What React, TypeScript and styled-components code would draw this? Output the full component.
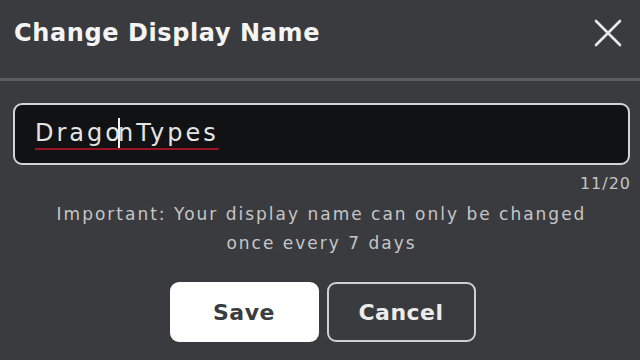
import React from 'react';
import styled, { createGlobalStyle } from 'styled-components';

const Global = createGlobalStyle`
  html, body {
    margin: 0;
    padding: 0;
    background: #393b3f;
  }
  body {
    font-family: "DejaVu Sans", "Liberation Sans", sans-serif;
    color: #ffffff;
  }
`

const Dialog = styled.div`
  width: 640px;
  height: 360px;
  background: #393b3f;
  display: flex;
  flex-direction: column;
  overflow: hidden;
`

const Header = styled.div`
  height: 78px;
  display: flex;
  align-items: center;
  justify-content: space-between;
  padding: 0 16px 12px 14px;
  box-sizing: border-box;
`

const Title = styled.h1`
  margin: 0;
  font-size: 24px;
  font-weight: 700;
  letter-spacing: 0.6px;
  color: #f4f4f4;
`

const CloseButton = styled.button`
  background: none;
  border: none;
  padding: 0;
  width: 32px;
  height: 32px;
  display: flex;
  align-items: center;
  justify-content: center;
  color: #e8e8e8;
  cursor: pointer;
`

const Divider = styled.div`
  height: 3px;
  background: #5c5e62;
`

const Body = styled.div`
  display: flex;
  flex-direction: column;
  padding: 22px 10px 0 13px;
`

const InputBox = styled.div`
  height: 58px;
  background: #111213;
  border: 2px solid #d4d4d4;
  border-radius: 9px;
  display: flex;
  align-items: center;
  padding: 0 20px;
`

const InputText = styled.span`
  font-size: 24px;
  letter-spacing: 3px;
  color: #e4e4e4;
  text-decoration: underline solid #9a1426;
  text-decoration-thickness: 2px;
  text-underline-offset: 7px;
  white-space: nowrap;
`

const Caret = styled.span`
  display: inline-block;
  width: 2px;
  height: 32px;
  margin: 0 -2px 0 -5px;
  vertical-align: middle;
  background: #f0f0f0;
`

const Counter = styled.div`
  align-self: flex-end;
  font-size: 16px;
  letter-spacing: 1px;
  color: #c4c4c4;
  margin-top: 9px;
  margin-right: -1px;
`

const Notice = styled.p`
  margin: 7px 0 0;
  text-align: center;
  font-size: 17px;
  letter-spacing: 2px;
  line-height: 29px;
  color: #c6c6c6;
`

const Actions = styled.div`
  display: flex;
  justify-content: center;
  gap: 8px;
  margin-top: 24px;
  padding-left: 2px;
`

const ActionButton = styled.button<{ $primary?: boolean }>`
  width: 149px;
  height: 60px;
  box-sizing: border-box;
  border-radius: 9px;
  font-family: inherit;
  font-size: 22px;
  font-weight: 700;
  letter-spacing: 0.5px;
  cursor: pointer;
  background: ${p => (p.$primary ? '#ffffff' : 'transparent')};
  color: ${p => (p.$primary ? '#3a3c40' : '#ececec')};
  border: ${p => (p.$primary ? 'none' : '2px solid #d0d0d0')};
`

function App() {
  return (
    <Dialog>
      <Global />
      <Header>
        <Title>Change Display Name</Title>
        <CloseButton aria-label="Close">
          <svg width="30" height="30" viewBox="0 0 30 30" fill="none" stroke="currentColor" strokeWidth="2.6" strokeLinecap="round">
            <path d="M3 3 L27 27 M27 3 L3 27" />
          </svg>
        </CloseButton>
      </Header>
      <Divider />
      <Body>
        <InputBox>
          <InputText>
            Drago<Caret />nTypes
          </InputText>
        </InputBox>
        <Counter>11/20</Counter>
        <Notice>
          Important: Your display name can only be changed
          <br />
          once every 7 days
        </Notice>
        <Actions>
          <ActionButton $primary>Save</ActionButton>
          <ActionButton>Cancel</ActionButton>
        </Actions>
      </Body>
    </Dialog>
  );
}

export default App;
